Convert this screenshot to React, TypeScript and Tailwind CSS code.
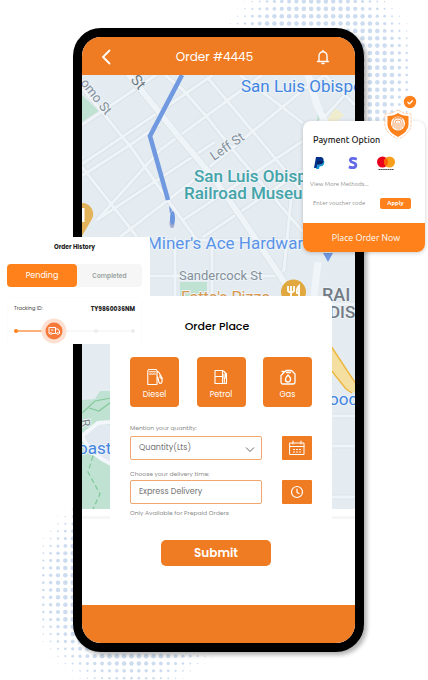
import type { ReactNode } from 'react';

function DotField({ cx, cy }: { cx: number; cy: number }) {
  const step = 7.35;
  const dots: ReactNode[] = [];
  for (let i = -12; i <= 12; i++) {
    for (let j = -12; j <= 12; j++) {
      const d = Math.hypot(i, j) * step;
      const r = Math.min(2.3, (111 - d) * 0.06);
      if (r > 0.2) dots.push(<circle key={i + '_' + j} cx={cx + i * step} cy={cy + j * step} r={r} />);
    }
  }
  return <g fill="#cddcee">{dots}</g>;
}

const roads = [
  'M82 125L156 75', 'M82 164L103 150L213 75', 'M97 220L160 150M160 150L262 75', 'M82 176L133 143L160 124',
  'M97 220L183 163L215 142', 'M120 237L190 183', 'M183 220L303 141', 'M203 237L243 210L303 170', 'M190 183L303 90L325 75',
  'M82 88L103 113L133 150L170 203L197 240L303 240', 'M165 75L183 90L207 117L233 150L303 232',
  'M207 77L260 140L303 192', 'M82 167L137 237', 'M240 75L303 123', 'M150 276H275L284 270L287 240L292 190',
  'M175 237V296', 'M212 240V296', 'M325 75L355 105', 'M318 124L355 84', 'M332 416H355', 'M332 446H355', 'M332 497H355', 'M323 304H355', 'M332 374H345L355 384',
];

function CityMap() {
  return (
    <svg
      className="absolute inset-x-0 top-0 h-[445px] w-full"
      viewBox="82 75 273 445"
      preserveAspectRatio="xMidYMin slice"
      fontFamily="Roboto, 'Liberation Sans', sans-serif"
    >
      <rect x="0" y="75" width="500" height="434" fill="#e5ecf1" />
      <rect x="0" y="516" width="500" height="3" fill="#f6f6f6" />
      <path d="M82 95L99 111L82 122Z" fill="#c0e2d2" />
      <path d="M318 104L326 113L321 122L317 121Z" fill="#c0e2d2" />
      <path d="M335 108L344 115L336 122H326Z" fill="#f0edcf" />
      <path d="M180 282H207V296H180Z" fill="#c0e2d2" />
      <path d="M82 400L95 399L100 391H111V509H82Z" fill="#c0e2d2" />
      <g fill="none" stroke="#d7e0e5" strokeWidth="4.6">
        {roads.map((d) => <path key={d} d={d} />)}
      </g>
      <g fill="none" stroke="#eff4f8" strokeWidth="3.2">
        {roads.map((d) => <path key={d} d={d} />)}
      </g>
      <path d="M125 70L180 138L213 177L243 220L283 280L294 300" fill="none" stroke="#d8e1e6" strokeWidth="7.5" />
      <path d="M125 70L180 138L213 177L243 220L283 280L294 300" fill="none" stroke="#eff4f8" strokeWidth="6" />
      <path d="M308 75L317 105L326 124M318 262L314 296" fill="none" stroke="#f0f5f9" strokeWidth="7" />
      <path d="M82 434C90 424 100 424 111 425V462C98 458 86 450 82 440Z" fill="#e2e9f0" />
      <path d="M82 436L98 423L111 422M82 436C88 450 98 458 111 464" fill="none" stroke="#f3f7fb" strokeWidth="4" />
      <path d="M82 413L95 401L111 398M89 408L99 411L111 402" fill="none" stroke="#84c99b" strokeWidth="1.2" />
      <path d="M93 456L88 472L100 494L93 509" fill="none" stroke="#84c99b" strokeWidth="1.3" strokeDasharray="5 3" />
      <path d="M331 346L356 384V394L346 389L331 370Z" fill="#f5dfa0" />
      <path d="M331 346L356 384M331 370L346 389L352 393" fill="none" stroke="#ecb63d" strokeWidth="1.4" />
      <path d="M182 75L150 136L168 200" fill="none" stroke="#7199df" strokeWidth="4.6" />
      <path d="M169 206L172 210L170 214Z" fill="#7199df" />
      <ellipse cx="172" cy="223" rx="2.5" ry="5" fill="#a5abcc" />
      <ellipse cx="172.500" cy="218" rx="2.500" ry="7" fill="#6a95df" />
      <path d="M323 253H333L328 262Z" fill="#7199df" />
      <path d="M82 203A11 11 0 0 1 92 219L82 236Z" fill="#e3b35c" />
      <path d="M83 208V222" stroke="#fff" strokeWidth="3" />
      <circle cx="293.500" cy="292" r="12.500" fill="#e0a83e" />
      <path d="M288 286v5q3 3 6 0v-5M291 286v13M299 299v-13q-3 3-2 7h2" fill="none" stroke="#fff" strokeWidth="1.8" />
      <g paintOrder="stroke" stroke="#edf3f7" strokeWidth="2" strokeLinejoin="round">
        <text x="241" y="92" fontSize="17" fill="#4385e0">San Luis Obispo</text>
        <text x="194" y="182" fontSize="17" fontWeight="500" fill="#44a4a9">San Luis Obispo</text>
        <text x="184" y="199" fontSize="17" fontWeight="500" fill="#44a4a9">Railroad Museum</text>
        <text x="147" y="249" fontSize="17" fill="#5a93e8">Miner's Ace Hardware</text>
        <text x="179" y="280" fontSize="13" fill="#84909b">Sandercock St</text>
        <text x="181" y="303" fontSize="16" fill="#d89a52">Fatte's Pizza</text>
        <text fontSize="13" fill="#84909b" transform="translate(214 161) rotate(-35)">Leff St</text>
        <text fontSize="13" fill="#84909b" transform="translate(80 83) rotate(52)">omo St</text>
        <text fontSize="15" fill="#717b84" transform="translate(130 80) rotate(50)">St</text>
        <text x="322" y="301" fontSize="18" fontWeight="500" fill="#737b84">RAI</text>
        <text x="329" y="318" fontSize="17" fontWeight="500" fill="#737b84">DIS</text>
        <text x="329" y="405" fontSize="17" fill="#4385e0">ood</text>
        <text x="78" y="454" fontSize="17" fill="#4385e0">oast</text>
        <text fontSize="12" fill="#717b84" transform="translate(81 420) rotate(80)">R</text>
      </g>
    </svg>
  );
}

const line = { fill: 'none', stroke: 'currentColor', strokeLinecap: 'round', strokeLinejoin: 'round' } as const;

function DieselIcon() {
  return (
    <svg className="h-4 w-4" viewBox="0 0 16 16" {...line} strokeWidth="1.1">
      <path d="M.8 15.500V2Q.8 .5 2.300 .5H8.500Q10 .5 10 2V15.500ZM2.500 2.800H8.500M2.500 5H8.500M10 7.500C12 8 11 14.500 13 14.500S15.200 13 15.200 9L12 3.500L10.500 2.500M13 5.500V8.500L15 10" />
    </svg>
  );
}

function PetrolIcon() {
  return (
    <svg className="h-4 w-4" viewBox="0 0 16 16" {...line} strokeWidth="1.1">
      <path d="M2 14.500V1.500H9.500V14.500ZM2 7.500H9.500M9.500 14.500H13.500V5L10.500 2M11 5V9H13.500M11.300 9V14" />
      <path d="M12.700 4.500V8" strokeWidth="1.5" />
    </svg>
  );
}

function GasIcon() {
  return (
    <svg className="h-4 w-4" viewBox="0 0 16 16" {...line} strokeWidth="1.300">
      <path d="M6 1.500H11.500L15 5V13Q15 15 13 15H3Q1 15 1 13V6.500L3 4.500L6 1.500ZM2 2.500H4M6.500 3.500H10.500" />
      <path d="M8 6Q11 9 10.500 10.500A2.500 2.500 0 0 1 5.500 10.500Q5.500 8.500 8 6Z" strokeWidth="1.500" />
    </svg>
  );
}

const fuels = [
  { name: 'Diesel', icon: <DieselIcon /> },
  { name: 'Petrol', icon: <PetrolIcon /> },
  { name: 'Gas', icon: <GasIcon /> },
];

const fieldClass =
  'block h-6 w-full appearance-none rounded-xs border border-[#f3a66f] bg-white px-2 text-[8px] leading-3 text-[#747474] outline-none';

const squareButtonClass =
  'flex h-6 w-[30px] items-center justify-center rounded-[1px] bg-[#ef7b22] text-white';

function OrderForm() {
  return (
    <form className="relative mt-[221px] mr-[23px] ml-7 flex flex-1 flex-col rounded-tr-lg bg-white px-5" onSubmit={(e) => e.preventDefault()}>
      <h2 className="mt-[22px] pr-2 text-center text-[11px] leading-4 font-medium text-black">Order Place</h2>
      <div className="mt-[23px] flex justify-between">
        {fuels.map((f) => (
          <button key={f.name} type="button" className="flex h-[50px] w-[49px] flex-col items-center rounded-sm bg-[#ef7b22] pt-3 text-white">
            {f.icon}
            <span className="mt-1 text-[8px] leading-3">{f.name}</span>
          </button>
        ))}
      </div>
      <label htmlFor="quantity" className="mt-[15px] text-[6px] leading-3 text-[#8b8b8b]">Mention your quantity:</label>
      <div className="mt-0.5 flex gap-5">
        <div className="relative flex-1">
          <select id="quantity" className={fieldClass}>
            <option>Quantity(Lts)</option>
          </select>
          <svg className="pointer-events-none absolute top-2.5 right-1.5 h-2 w-3" viewBox="0 0 12 8" fill="none" stroke="#666" strokeWidth="1">
            <path d="M2 1.500L6 5.500L10 1.500" />
          </svg>
        </div>
        <button type="button" aria-label="Pick a date" className={squareButtonClass}>
          <svg className="h-4 w-4" viewBox="0 0 16 16" {...line} strokeWidth="1">
            <path d="M1 3H15V14.500H1ZM1 6.500H15M4 1V4M12 1V4" />
            <path d="M4.500 9.500H11.500M4.500 12H11.500" strokeDasharray="1 2" />
          </svg>
        </button>
      </div>
      <label htmlFor="delivery" className="mt-2 text-[6px] leading-3 text-[#8b8b8b]">Choose your delivery time:</label>
      <div className="flex gap-5">
        <div className="flex-1">
          <input id="delivery" defaultValue="Express Delivery" className={fieldClass} />
        </div>
        <button type="button" aria-label="Pick a time" className={squareButtonClass}>
          <svg className="h-4 w-4" viewBox="0 0 16 16" {...line} strokeWidth="1.200">
            <circle cx="8" cy="8" r="5.500" />
            <path d="M8 5V8.500L10 9.500" />
          </svg>
        </button>
      </div>
      <p className="mt-[3px] text-[6px] leading-3 text-[#8b8b8b]">Only Available for Prepaid Orders</p>
      <button type="submit" className="mt-[21px] mr-2.5 h-[26px] w-[110px] self-center rounded-[5px] bg-[#ef7b22] text-[12px] leading-4 font-semibold text-white">
        Submit
      </button>
    </form>
  );
}

function OrderHistory() {
  return (
    <section className="absolute top-[237px] left-0 h-[107px] w-[150px] bg-white pr-2 pl-[7px] text-[#202020]">
      <h2 className="mt-1 text-center text-[6px] leading-3 font-bold">Order History</h2>
      <div className="mt-[11px] flex h-[23px] rounded-sm bg-[#f6f6f6]">
        <button type="button" className="w-[70px] rounded-sm bg-[#fe811b] text-[8px] leading-3 text-white">Pending</button>
        <button type="button" className="flex-1 text-[6px] leading-3 font-semibold text-[#9ba5a2]">Completed</button>
      </div>
      <div className="mt-[10px] rounded-t-md border-x border-t border-[#fcfcfc] px-1.5 pt-[5px]">
        <div className="flex items-center justify-between leading-3">
          <span className="text-[5px] text-[#444]">Tracking ID:</span>
          <span className="text-[6px] font-bold">TY9860036NM</span>
        </div>
        <svg className="mt-[3px] h-[26px] w-full" viewBox="0 0 121 26" preserveAspectRatio="xMinYMid meet">
          <path d="M0 13H121" stroke="#efefef" />
          <path d="M1 13H40" stroke="#fe9950" strokeWidth="1.500" />
          <circle cx="2" cy="13" r="2" fill="#fe811b" />
          <circle cx="82" cy="13" r="2" fill="#ececec" />
          <circle cx="119" cy="13" r="2" fill="#ececec" />
          <circle cx="40" cy="13" r="12.500" fill="#fde0d2" />
          <circle cx="40" cy="13" r="8.500" fill="#f7793a" />
          <path d="M36 15.500H35V9.500H41.500V15.500H38M41.500 11H44L45.500 13V15.500H45M37 12H39.500M42 15.500H43" fill="none" stroke="#fff" strokeWidth="1" />
          <circle cx="37" cy="15.500" r="1" fill="#f7793a" stroke="#fff" strokeWidth=".8" />
          <circle cx="43.800" cy="15.500" r="1" fill="#f7793a" stroke="#fff" strokeWidth=".8" />
        </svg>
      </div>
    </section>
  );
}

function PaymentCard() {
  return (
    <section className="absolute top-[121px] right-[3px] flex h-[131px] w-[122px] flex-col rounded-lg bg-white font-['Ubuntu','Noto_Sans','Open_Sans',sans-serif] shadow-[0_1px_4px_rgba(0,0,0,0.2)]">
      <h2 className="mt-3 pl-2.5 text-[9px] leading-[14px] font-medium text-[#191919]">Payment Option</h2>
      <div className="mt-2 flex h-4 items-center pl-2.5">
        <svg className="h-3.5 w-3" viewBox="0 0 12 14">
          <path d="M3 1H8Q11 1.500 10.500 5Q10 8.500 6 8.500H4.500L4 12H1Z" fill="#003087" />
          <path d="M10.500 4Q12 5 11 8Q10 10.500 6.500 10.500L6 13H3L4.500 8.500H6Q10 8.500 10.500 4Z" fill="#1594d6" />
          <path d="M4.500 5H10.500Q10 8.500 6 8.500H4Z" fill="#012169" />
        </svg>
        <svg className="ml-[22px] h-3.5 w-3" viewBox="0 0 12 14">
          <path d="M9.800 3.200Q7.500 2.200 5.300 2.400C2.200 3.200 3 5.800 6 6.500C10.300 7.700 9.500 11.600 5.500 11.700Q4 11.700 1.800 10.900" fill="none" stroke="#6469e8" strokeWidth="2.800" />
        </svg>
        <svg className="ml-[17px] h-4 w-5" viewBox="0 0 20 16">
          <circle cx="6.500" cy="7" r="5.500" fill="#eb001b" />
          <circle cx="13.500" cy="7" r="5.500" fill="#f79e1b" />
          <path d="M10 2.800A5.500 5.500 0 0 1 10 11.200A5.500 5.500 0 0 1 10 2.800" fill="#ff5f00" />
          <path d="M2.500 14.500H18" stroke="#444" strokeWidth="1" strokeDasharray="1.500 .4" />
        </svg>
      </div>
      <a href="#methods" className="mt-[7px] pl-[7px] text-[6px] leading-3 text-[#8f8f8f]">View More Methods...</a>
      <div className="mt-[7px] flex items-center justify-between pr-3.5 pl-2.5">
        <input aria-label="Voucher code" placeholder="Enter voucher code" className="h-3 w-[60px] min-w-0 text-[6px] leading-3 outline-none placeholder:text-[#8f8f8f]" />
        <button type="button" className="h-[11px] w-[31px] rounded-xs bg-[#fe811b] text-[6px] leading-[10px] font-semibold text-white">Apply</button>
      </div>
      <button type="button" className="mt-auto h-[29px] w-full rounded-b-lg bg-[#fe811b] pl-1 text-[9px] leading-4 text-white">Place Order Now</button>
      <svg className="absolute -top-7 right-2 h-[46px] w-9" viewBox="381 93 36 46">
        <circle cx="410" cy="102" r="6.200" fill="#fe811b" />
        <path d="M407.500 102L409.300 103.800L412.800 100.500" fill="none" stroke="#fff" strokeWidth="1.300" />
        <path d="M398 110L404 113L411 114V126Q410 133 398 139.500Q386 133 385 126V114L392 113Z" fill="#fff" stroke="#f9bb90" strokeWidth=".7" strokeDasharray="3 1" />
        <path d="M398 113Q402 116 408.500 116V125Q408 132 398 137Q388 132 387.500 125V116Q394 116 398 113Z" fill="#fe811b" />
        <circle cx="398" cy="123.500" r="7" fill="#fff" />
        <g fill="none" stroke="#f28c3f" strokeWidth=".8">
          <path d="M393 127V123A5 5 0 0 1 403 123V127M395 128.500V123A3 3 0 0 1 401 123V129M397 129.500V123.500Q398 121.500 399 123.500V130M393.500 119Q398 115.500 402.500 119" />
        </g>
      </svg>
    </section>
  );
}

export default function App() {
  return (
    <main className="relative min-h-[680px] w-full overflow-hidden bg-white pt-7 pr-16 pb-7 pl-[73px] font-['Poppins','Inter',sans-serif]">
      <svg className="absolute top-0 right-0 h-[680px] w-[428px]" viewBox="0 0 428 680" aria-hidden="true">
        <DotField cx={318.5} cy={75} />
      </svg>
      <svg className="absolute top-0 left-0 h-[680px] w-[428px]" viewBox="0 0 428 680" aria-hidden="true">
        <DotField cx={131.5} cy={590} />
      </svg>
      <div className="relative flex min-h-[624px] flex-col overflow-hidden rounded-[28px] border-[9px] border-black bg-white shadow-[3px_3px_4px_rgba(0,0,0,0.3)]">
        <header className="flex h-[38px] items-center justify-between bg-[#ef7b22] pt-0.5 pr-6 pl-4 text-white">
          <button type="button" aria-label="Back" className="flex h-5 w-4 items-center justify-center">
            <svg className="h-4 w-3" viewBox="0 0 12 16" {...line} strokeWidth="1.800">
              <path d="M9.500 1.500L3 8L9.500 14.500" />
            </svg>
          </button>
          <h1 className="text-[12px] leading-5">Order #4445</h1>
          <button type="button" aria-label="Notifications" className="flex h-5 w-4 items-center justify-center">
            <svg className="h-4 w-4" viewBox="0 0 16 16" {...line} strokeWidth="1.400">
              <path d="M2.500 12.500H13.500M4 12.500V7A4 4.300 0 0 1 12 7V12.500M8 2.500V1.500M7 14.500H9" />
            </svg>
          </button>
        </header>
        <div className="relative flex flex-1 flex-col">
          <CityMap />
          <OrderForm />
        </div>
        <footer className="h-[38px] bg-[#ef7b22]" />
      </div>
      <PaymentCard />
      <OrderHistory />
    </main>
  );
}
